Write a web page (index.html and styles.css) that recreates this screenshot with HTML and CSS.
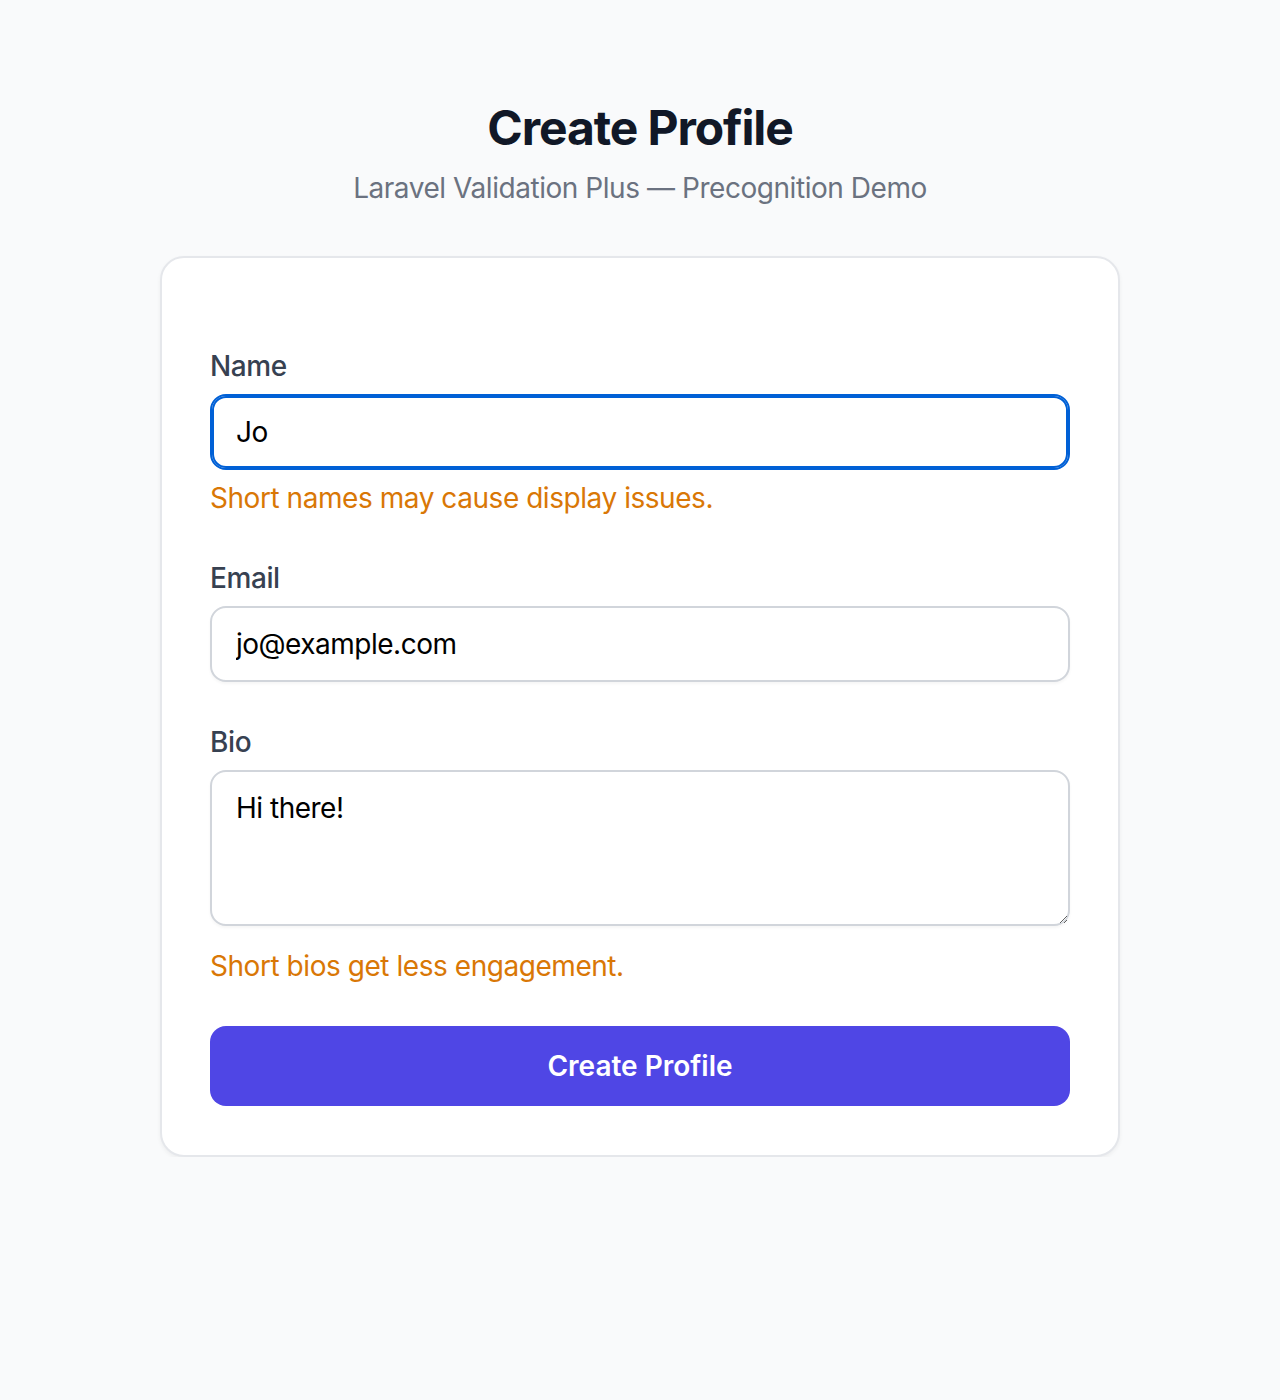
FILE: index.html
```html
<!DOCTYPE html>
<html lang="en">
<head>
<meta charset="utf-8">
<title>Create Profile</title>
<link rel="stylesheet" href="styles.css">
</head>
<body>
<main class="page">
  <header class="header">
    <h1 class="title">Create Profile</h1>
    <p class="subtitle">Laravel Validation Plus — Precognition Demo</p>
  </header>
  <section class="card">
    <form class="form" onsubmit="return false">
      <div class="status"></div>
      <div class="field">
        <label class="label" for="name">Name</label>
        <input class="input input-focus" id="name" type="text" value="Jo">
        <p class="warning">Short names may cause display issues.</p>
      </div>
      <div class="field">
        <label class="label" for="email">Email</label>
        <input class="input" id="email" type="email" value="jo@example.com">
      </div>
      <div class="field">
        <label class="label" for="bio">Bio</label>
        <textarea class="input textarea" id="bio" rows="3">Hi there!</textarea>
        <p class="warning warning-bio">Short bios get less engagement.</p>
      </div>
      <button class="button" type="submit">Create Profile</button>
    </form>
  </section>
</main>
</body>
</html>
```

FILE: styles.css
```css
* { box-sizing: border-box; }

html, body {
  margin: 0;
  padding: 0;
  background: #f9fafb;
  font-family: "Inter", "Noto Sans", "Liberation Sans", sans-serif;
}

.page {
  padding-top: 96px;
  display: flex;
  flex-direction: column;
  align-items: center;
}

.header {
  text-align: center;
}

.title {
  margin: 0;
  font-size: 48px;
  line-height: 64px;
  font-weight: 700;
  color: #111827;
  letter-spacing: -1.1px;
}

.subtitle {
  margin: 8px 0 0;
  font-size: 28px;
  line-height: 40px;
  color: #6b7280;
  letter-spacing: -0.45px;
}

.card {
  margin-top: 48px;
  width: 960px;
  background: #ffffff;
  border: 2px solid #e5e7eb;
  border-radius: 24px;
  box-shadow: 0 2px 4px rgba(0, 0, 0, 0.05);
  padding: 48px 48px 49px;
}

.form {
  display: flex;
  flex-direction: column;
  gap: 40px;
  margin: 0;
}

.status { height: 0; }

.field {
  display: flex;
  flex-direction: column;
}

.label {
  font-size: 28px;
  line-height: 40px;
  font-weight: 500;
  color: #374151;
  margin-bottom: 8px;
  letter-spacing: -0.4px;
}

.input {
  display: block;
  width: 100%;
  font-family: "Inter", "Noto Sans", "Liberation Sans", sans-serif;
  font-size: 28px;
  line-height: 40px;
  letter-spacing: -0.5px;
  color: #000000;
  padding: 16px 24px;
  border: 2px solid #d1d5db;
  border-radius: 16px;
  background: #ffffff;
  box-shadow: 0 2px 3px rgba(0, 0, 0, 0.04);
  outline: none;
}

.input-focus {
  border-color: #0060d6;
  box-shadow: inset 0 0 0 2px #0060d6;
}

.textarea {
  height: 156px;
  resize: vertical;
}

.warning {
  margin: 8px 0 0;
  font-size: 28px;
  line-height: 40px;
  color: #d97706;
  letter-spacing: -0.45px;
}

.warning-bio {
  margin-top: 20px;
}

.button {
  display: block;
  width: 100%;
  height: 80px;
  border: none;
  border-radius: 16px;
  background: #4f46e5;
  color: #ffffff;
  font-family: "Inter", "Noto Sans", "Liberation Sans", sans-serif;
  font-size: 28px;
  font-weight: 600;
  line-height: 40px;
  cursor: pointer;
}
```
